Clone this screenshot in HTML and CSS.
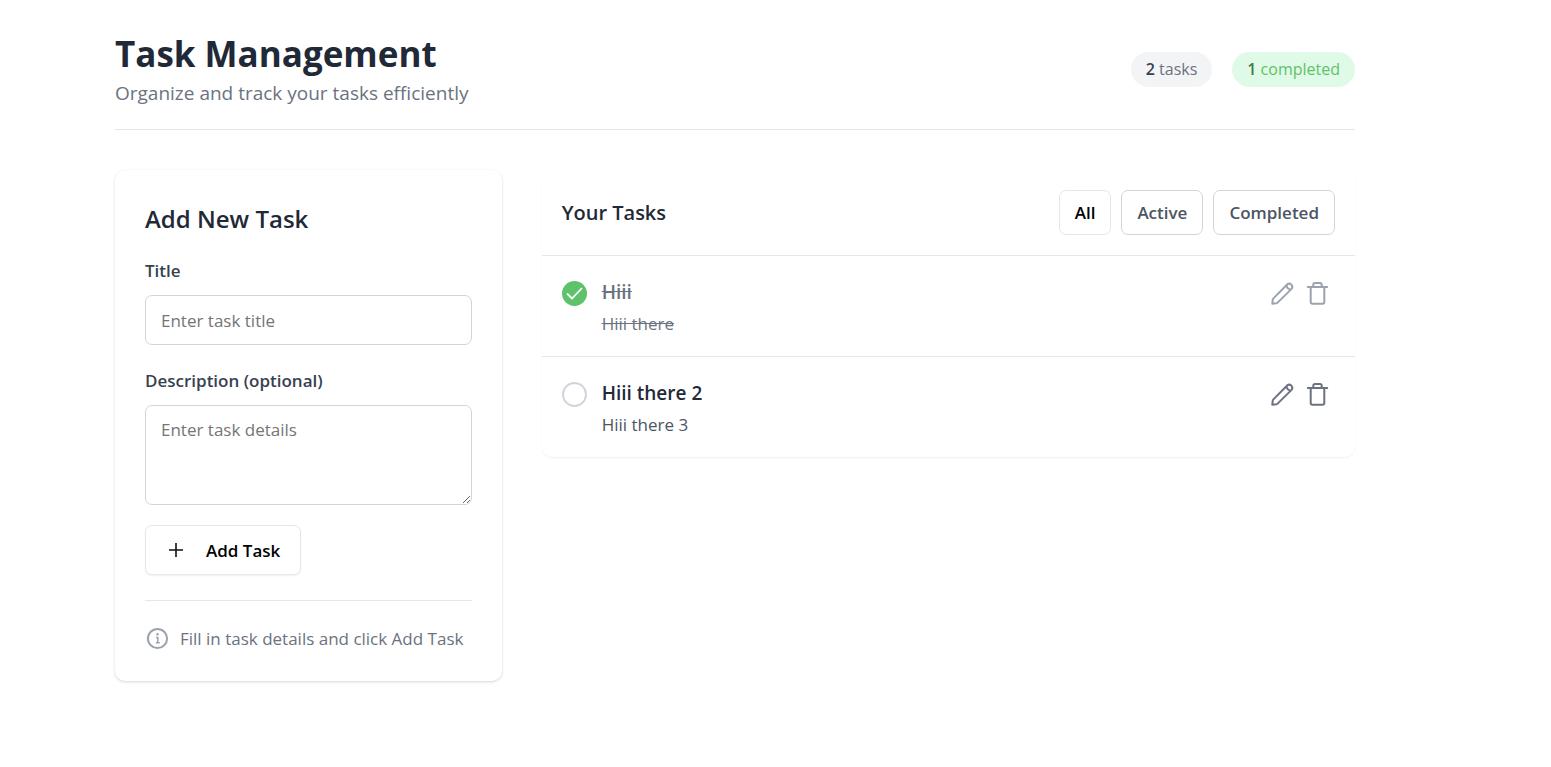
FILE: index.html
```html
<!DOCTYPE html>
<html lang="en">
<head>
<meta charset="utf-8">
<meta name="viewport" content="width=device-width, initial-scale=1">
<title>Task Management</title>
<link rel="stylesheet" href="styles.css">
</head>
<body>
<svg class="sprite" aria-hidden="true">
  <symbol id="pencil" viewBox="0 0 25 25"><path d="M2.300 22.700 2.700 18.800Q2.800 18 3.400 17.400L17.400 3.200A3.200 3.200 0 0 1 21.800 7.600L7.600 21.600Q7 22.200 6.200 22.300ZM16.600 4.200Q16.800 7.800 20.600 8.400"/></symbol>
  <symbol id="trash" viewBox="0 0 25 25"><path d="M2.800 6h19.400M5.700 6v15a1.800 1.800 0 0 0 1.800 1.800h10a1.800 1.800 0 0 0 1.800-1.800V6M8.300 6V3.800A1.800 1.800 0 0 1 10.100 2h4.800a1.800 1.800 0 0 1 1.800 1.800V6"/></symbol>
</svg>
<div class="page">
  <header class="page-header">
    <div>
      <h1 class="page-title">Task Management</h1>
      <p class="page-subtitle">Organize and track your tasks efficiently</p>
    </div>
    <div class="stats">
      <span class="pill"><b class="pill-count">2</b> tasks</span>
      <span class="pill pill-done"><b class="pill-count">1</b> completed</span>
    </div>
  </header>
  <main class="columns">
    <section class="card form-card">
      <h2 class="form-title">Add New Task</h2>
      <form>
        <div class="field">
          <label class="label" for="title">Title</label>
          <input class="control" id="title" type="text" placeholder="Enter task title">
        </div>
        <div class="field">
          <label class="label" for="details">Description (optional)</label>
          <textarea class="control control-area" id="details" placeholder="Enter task details"></textarea>
        </div>
        <button class="button add-button" type="button">
          <svg class="plus" viewBox="0 0 20 20" aria-hidden="true"><path d="M10 3v14M3 10h14"/></svg>
          Add Task
        </button>
      </form>
      <p class="hint">
        <svg class="info" viewBox="0 0 25 25" aria-hidden="true"><circle cx="12.500" cy="12.500" r="9.600"/><path class="info-mark" d="M11 11.500h1.800v5M10.800 16.700h4"/><circle class="info-dot" cx="12.500" cy="8.300" r="1.200"/></svg>
        Fill in task details and click Add Task
      </p>
    </section>
    <section class="card list-card">
      <div class="list-header">
        <h2 class="list-title">Your Tasks</h2>
        <div class="filters">
          <button class="button filter filter-current" type="button">All</button>
          <button class="button filter" type="button">Active</button>
          <button class="button filter" type="button">Completed</button>
        </div>
      </div>
      <ul class="tasks">
        <li class="task task-done">
          <input class="check" type="checkbox" id="task-1" checked>
          <label class="task-text" for="task-1">
            <span class="task-name">Hiii</span>
            <span class="task-details">Hiii there</span>
          </label>
          <div class="actions">
            <button class="icon-button" type="button" aria-label="Edit"><svg class="icon"><use href="#pencil"/></svg></button>
            <button class="icon-button" type="button" aria-label="Delete"><svg class="icon"><use href="#trash"/></svg></button>
          </div>
        </li>
        <li class="task">
          <input class="check" type="checkbox" id="task-2">
          <label class="task-text" for="task-2">
            <span class="task-name">Hiii there 2</span>
            <span class="task-details">Hiii there 3</span>
          </label>
          <div class="actions">
            <button class="icon-button" type="button" aria-label="Edit"><svg class="icon"><use href="#pencil"/></svg></button>
            <button class="icon-button" type="button" aria-label="Delete"><svg class="icon"><use href="#trash"/></svg></button>
          </div>
        </li>
      </ul>
    </section>
  </main>
</div>
</body>
</html>
```
FILE: styles.css
```css
* { box-sizing: border-box; }
body {
  margin: 0;
  background: #fff;
  color: #1f2937;
  font: 400 17px/25px "Open Sans", "Noto Sans", sans-serif;
}
h1, h2, p, ul { margin: 0; padding: 0; }
button, input, textarea { font: inherit; }
.sprite { display: none; }
.page { max-width: 1355px; padding: 30px 0 30px 115px; }
.page-header {
  display: flex;
  justify-content: space-between;
  align-items: center;
  padding-bottom: 20px;
  border-bottom: 1px solid #e5e7eb;
}
.page-title { font-size: 35px; line-height: 48px; font-weight: 700; }
.page-subtitle { font-size: 19px; line-height: 31px; color: #6b7280; }
.stats { display: flex; gap: 20px; }
.pill {
  padding: 5px 15px;
  border-radius: 18px;
  background: #f3f4f6;
  color: #6b7280;
  font-size: 16px;
}
.pill-count { color: #374151; font-weight: 600; }
.pill-done { background: #e0fae8; color: #5ec26a; }
.pill-done .pill-count { color: #3f7d49; }
.columns {
  display: grid;
  grid-template-columns: repeat(3, minmax(0, 1fr));
  gap: 40px;
  align-items: start;
  margin-top: 40px;
}
.card { border-radius: 10px; background: #fff; }
.form-card { padding: 30px; box-shadow: 0 1px 3px rgba(0, 0, 0, 0.16); }
.list-card { grid-column: span 2; box-shadow: 0 1px 2px rgba(0, 0, 0, 0.06); }
.form-title { margin-bottom: 20px; font-size: 24px; line-height: 38px; font-weight: 600; }
.field { margin-bottom: 23px; }
.field + .field { margin-bottom: 20px; }
.label { display: block; margin-bottom: 12px; color: #374151; font-weight: 600; }
.control {
  display: block;
  width: 100%;
  height: 50px;
  padding: 11px 15px;
  border: 1px solid #d1d5db;
  border-radius: 7px;
  background: #fff;
  color: #1f2937;
}
.control::placeholder { color: #757575; }
.control-area { height: 100px; resize: vertical; }
.button {
  border: 1px solid #d1d5db;
  border-radius: 7px;
  background: #fff;
  color: #4b5563;
  font-weight: 600;
}
.add-button {
  display: flex;
  align-items: center;
  gap: 20px;
  height: 50px;
  padding: 0 20px;
  border-color: #e5e7eb;
  color: #000;
  box-shadow: 0 1px 2px rgba(0, 0, 0, 0.06);
}
.plus { width: 20px; height: 20px; fill: none; stroke: #111; stroke-width: 1.6; }
.hint {
  display: flex;
  align-items: center;
  gap: 10px;
  margin-top: 25px;
  padding-top: 25px;
  border-top: 1px solid #e5e7eb;
  color: #6b7280;
}
.info { flex: none; width: 25px; height: 25px; fill: none; stroke: #9ca3af; stroke-width: 2; }
.info-mark { stroke-width: 1.5; }
.info-dot { fill: #9ca3af; stroke: none; }
.list-header {
  display: flex;
  align-items: center;
  justify-content: space-between;
  padding: 20px;
  border-bottom: 1px solid #e5e7eb;
}
.list-title { font-size: 20px; line-height: 30px; font-weight: 600; }
.filters { display: flex; gap: 10px; }
.filter { height: 45px; padding: 0 15px; }
.filter-current { border-color: #e5e7eb; color: #000; }
.tasks { list-style: none; }
.task { display: flex; gap: 15px; padding: 20px; }
.task + .task { border-top: 1px solid #e5e7eb; }
.check {
  flex: none;
  appearance: none;
  width: 25px;
  height: 25px;
  margin: 5px 0 0;
  border: 2px solid #d1d5db;
  border-radius: 50%;
  background: #fff;
}
.check:checked {
  border: 0;
  background: #5ec26a url("data:image/svg+xml,%3Csvg xmlns='http://www.w3.org/2000/svg' viewBox='0 0 25 25' fill='none' stroke='white' stroke-width='1.800'%3E%3Cpath d='M5 12.500l5 5L20 7'/%3E%3C/svg%3E");
}
.task-text { flex: 1; }
.task-name, .task-details { display: block; width: fit-content; }
.task-name { margin-bottom: 4px; font-size: 19px; line-height: 32px; font-weight: 600; }
.task-details { line-height: 24px; color: #4b5563; }
.task-done .task-name, .task-done .task-details { color: #6b7280; text-decoration: line-through; }
.actions { display: flex; }
.icon-button {
  display: grid;
  place-items: center;
  width: 35px;
  height: 35px;
  padding: 0;
  border: 0;
  background: none;
  color: #6b7280;
}
.task-done .icon-button { color: #9ca3af; }
.icon {
  width: 25px;
  height: 25px;
  fill: none;
  stroke: currentColor;
  stroke-width: 2;
  stroke-linecap: round;
  stroke-linejoin: round;
}
```
